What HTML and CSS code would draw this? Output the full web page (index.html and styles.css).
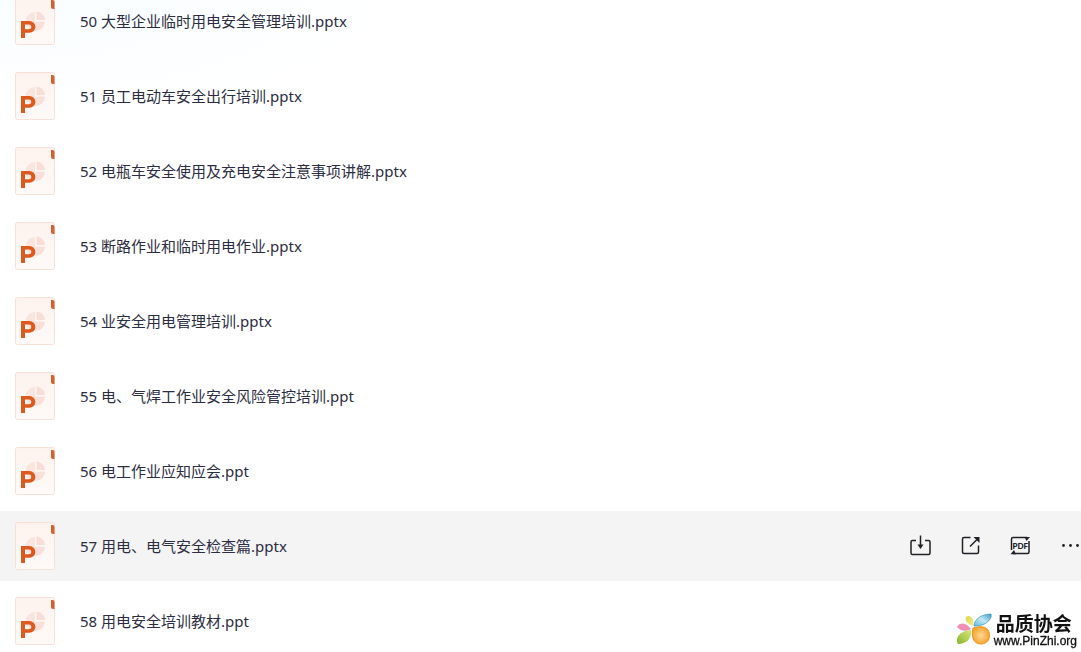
FILE: index.html
```html
<!DOCTYPE html>
<html lang="zh-CN">
<head>
  <meta charset="UTF-8">
  <meta name="viewport" content="width=device-width, initial-scale=1.0">
  <title>文件列表</title>
  <link rel="stylesheet" href="styles.css">
</head>
<body>
  <!-- Shared file icon -->
  <svg class="sprite" aria-hidden="true">
    <defs>
      <linearGradient id="paper" x1="0" y1="0" x2="0" y2="1">
        <stop offset="0" stop-color="#fdf2ee"/>
        <stop offset="1" stop-color="#fefaf8"/>
      </linearGradient>
    </defs>
    <symbol id="ppt" viewBox="0 0 40 48">
      <rect x="0.5" y="0.5" width="39" height="47" rx="2" fill="url(#paper)" stroke="#f6e0d8"/>
      <path d="M20 15a9.500 9.500 0 1 0 9.500 9.500H20z" fill="#f9e4de"/>
      <path d="M21.500 14.500a9 9 0 0 1 8.500 8.500h-8.500z" fill="#f8ded7"/>
      <path d="M21.500 25h8.500a9 9 0 0 1-8.500 8.500z" fill="#f8dfd9"/>
      <path d="M36 3h1.500a2 2 0 0 1 2 2v7H38a2 2 0 0 1-2-2z" fill="#d0622f"/>
      <path fill-rule="evenodd" d="M6 24h8.500a5.700 5.700 0 0 1 0 11.800H10V41H6zM10 27.600v4.700h4a2.300 2.300 0 0 0 0-4.700z" fill="#dc5a1e"/>
    </symbol>
  </svg>

  <main class="file-page">
    <ul class="file-list">
      <li class="file-row">
        <svg class="file-icon" aria-hidden="true"><use href="#ppt"/></svg>
        <a href="#" class="file-name">50 大型企业临时用电安全管理培训.pptx</a>
      </li>
      <li class="file-row">
        <svg class="file-icon" aria-hidden="true"><use href="#ppt"/></svg>
        <a href="#" class="file-name">51 员工电动车安全出行培训.pptx</a>
      </li>
      <li class="file-row">
        <svg class="file-icon" aria-hidden="true"><use href="#ppt"/></svg>
        <a href="#" class="file-name">52 电瓶车安全使用及充电安全注意事项讲解.pptx</a>
      </li>
      <li class="file-row">
        <svg class="file-icon" aria-hidden="true"><use href="#ppt"/></svg>
        <a href="#" class="file-name">53 断路作业和临时用电作业.pptx</a>
      </li>
      <li class="file-row">
        <svg class="file-icon" aria-hidden="true"><use href="#ppt"/></svg>
        <a href="#" class="file-name">54 业安全用电管理培训.pptx</a>
      </li>
      <li class="file-row">
        <svg class="file-icon" aria-hidden="true"><use href="#ppt"/></svg>
        <a href="#" class="file-name">55 电、气焊工作业安全风险管控培训.ppt</a>
      </li>
      <li class="file-row">
        <svg class="file-icon" aria-hidden="true"><use href="#ppt"/></svg>
        <a href="#" class="file-name">56 电工作业应知应会.ppt</a>
      </li>
      <li class="file-row active">
        <svg class="file-icon" aria-hidden="true"><use href="#ppt"/></svg>
        <a href="#" class="file-name">57 用电、电气安全检查篇.pptx</a>
        <div class="file-actions">
          <button type="button" class="action" aria-label="下载">
            <svg viewBox="0 0 22 22" aria-hidden="true">
              <path class="line" d="M7 5.500H3.500A1.500 1.500 0 0 0 2 7v11a1.500 1.500 0 0 0 1.500 1.500h16A1.500 1.500 0 0 0 21 18V7a1.500 1.500 0 0 0-1.500-1.500H16M11.500 0.500v11"/>
              <path d="M8.500 9.500h6l-3 4.500z"/>
            </svg>
          </button>
          <button type="button" class="action" aria-label="分享">
            <svg viewBox="0 0 22 22" aria-hidden="true">
              <path class="line" d="M11.500 2.500H5A1.500 1.500 0 0 0 3.500 4v13A1.500 1.500 0 0 0 5 18.500h13a1.500 1.500 0 0 0 1.500-1.500v-6.500M11 11.500L18 4.500"/>
              <path d="M14.500 2h6v6l-2-2-2-2z"/>
            </svg>
          </button>
          <button type="button" class="action" aria-label="转为PDF">
            <svg viewBox="0 0 22 22" aria-hidden="true">
              <path class="line" d="M2.500 15V4A1.500 1.500 0 0 1 4 2.500h14M20 6v11a1.500 1.500 0 0 1-1.500 1.500H4"/>
              <path d="M15.500 2h5.500l-3.500 4zM1.500 19.200h5.500L5 15z"/>
              <text x="11.300" y="13.500" text-anchor="middle">PDF</text>
            </svg>
          </button>
          <button type="button" class="action" aria-label="更多">
            <svg viewBox="0 0 22 22" aria-hidden="true">
              <circle cx="4.500" cy="10.500" r="1.400"/>
              <circle cx="11.500" cy="10.500" r="1.400"/>
              <circle cx="18.500" cy="10.500" r="1.400"/>
            </svg>
          </button>
        </div>
      </li>
      <li class="file-row">
        <svg class="file-icon" aria-hidden="true"><use href="#ppt"/></svg>
        <a href="#" class="file-name">58 用电安全培训教材.ppt</a>
      </li>
    </ul>
  </main>

  <!-- Site mark over the list -->
  <div class="watermark">
    <svg class="watermark-logo" viewBox="0 0 38 36" aria-hidden="true">
      <defs>
        <linearGradient id="blue" x1="0" y1="1" x2="1" y2="0">
          <stop offset="0" stop-color="#5db9dc"/>
          <stop offset="0.500" stop-color="#c4e8f3"/>
          <stop offset="1" stop-color="#3a9cc8"/>
        </linearGradient>
        <radialGradient id="orange">
          <stop offset="0" stop-color="#ffd79a"/>
          <stop offset="1" stop-color="#f7a62e"/>
        </radialGradient>
        <linearGradient id="green" x1="1" y1="0" x2="0" y2="1">
          <stop offset="0" stop-color="#dbe67c"/>
          <stop offset="1" stop-color="#86b62c"/>
        </linearGradient>
        <linearGradient id="yellow" x1="0" y1="0" x2="1" y2="1">
          <stop offset="0" stop-color="#d8d84a"/>
          <stop offset="1" stop-color="#fbe88a"/>
        </linearGradient>
      </defs>
      <path d="M18 14C18 7 26 2 35 2c2 6-8 13-17 12z" fill="url(#blue)" stroke="#3795bd" stroke-width="0.700"/>
      <path d="M17 14C11 12 9 8 10 5c4-3 9 2 7 9z" fill="url(#yellow)"/>
      <path d="M15 17C10 20 4 19 1 15c3-6 10-4 14 2z" fill="#ef8fb4"/>
      <path d="M15 18c1 8-4 14-13 14-4-6 3-14 13-14z" fill="url(#green)"/>
      <path d="M17 16c7-2 14-2 16 4 2 7-2 12-8 12-8 0-10-8-8-16z" fill="url(#orange)" stroke="#ee951f"/>
    </svg>
    <div class="watermark-text">
      <span class="watermark-name">品质协会</span>
      <span class="watermark-url">www.PinZhi.org</span>
    </div>
  </div>
</body>
</html>
```
FILE: styles.css
```css
* {
  box-sizing: border-box;
}

body {
  margin: 0;
  background: #fff;
  color: #2c2d42;
  font-family: "Noto Sans", "Noto Sans CJK SC", sans-serif;
  font-size: 15px;
}

.sprite {
  position: absolute;
  width: 0;
  height: 0;
}

.file-page {
  height: 100vh;
  overflow: hidden;
  background: radial-gradient(400px 120px at top left, #f8fdff, #fff);
}

/* the list is scrolled part of a row down */
.file-list {
  display: flex;
  flex-direction: column;
  gap: 5px;
  margin: -14px 0 0;
  padding: 0;
  list-style: none;
}

.file-row {
  display: flex;
  align-items: center;
  flex-shrink: 0;
  height: 70px;
  padding-left: 15px;
}

.file-row.active {
  background: #f4f4f4;
}

.file-icon {
  width: 40px;
  height: 48px;
  flex-shrink: 0;
}

.file-name {
  flex: 1;
  margin-left: 25px;
  color: inherit;
  line-height: 24px;
  text-decoration: none;
  white-space: nowrap;
}

.file-actions {
  display: flex;
  gap: 28px;
}

.action {
  width: 22px;
  height: 22px;
  padding: 0;
  border: 0;
  background: none;
  color: #202126;
  cursor: pointer;
}

.action svg {
  display: block;
  width: 22px;
  height: 22px;
  fill: currentColor;
}

.action .line {
  fill: none;
  stroke: currentColor;
  stroke-width: 1.5;
}

.action text {
  font-family: Lato, sans-serif;
  font-size: 8px;
  font-weight: 900;
}

.watermark {
  position: fixed;
  right: 4px;
  bottom: 4px;
  display: flex;
  align-items: center;
  color: #111;
}

.watermark-logo {
  width: 38px;
  height: 36px;
}

.watermark-text {
  display: flex;
  flex-direction: column;
}

.watermark-name {
  padding-left: 2px;
  font-family: "Noto Sans CJK SC", sans-serif;
  font-size: 19px;
  font-weight: 700;
  line-height: 22px;
}

.watermark-url {
  font-family: "Liberation Sans", Arial, sans-serif;
  font-size: 12px;
  line-height: 14px;
  -webkit-text-stroke: 0.3px #111;
}
```
